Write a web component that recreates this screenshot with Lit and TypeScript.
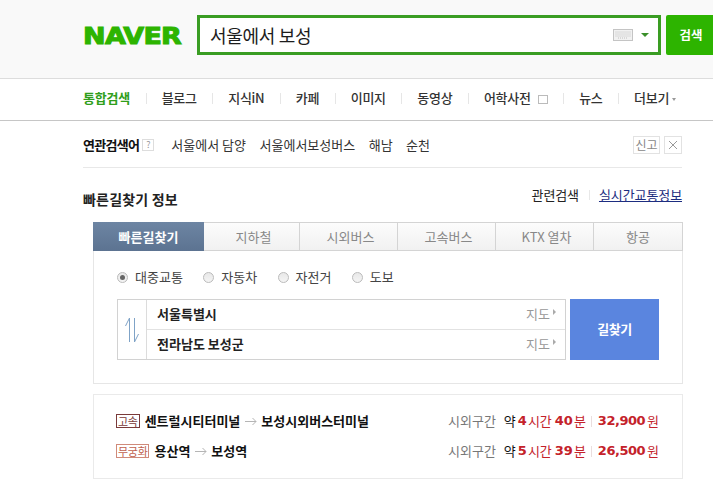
import { LitElement, html, css } from "lit";
import { customElement } from "lit/decorators.js";

const NAV = ["블로그", "지식iN", "카페", "이미지", "동영상", "어학사전", "뉴스", "더보기"];
const TABS = ["빠른길찾기", "지하철", "시외버스", "고속버스", "KTX 열차", "항공"];
const MODES = ["대중교통", "자동차", "자전거", "도보"];
const PLACES = ["서울특별시", "전라남도 보성군"];
const ROUTES = [
  { badge: "고속", cls: "dark", from: "센트럴시티터미널", to: "보성시외버스터미널", h: "4", m: "40", price: "32,900" },
  { badge: "무궁화", cls: "light", from: "용산역", to: "보성역", h: "5", m: "39", price: "26,500" },
];

@customElement("app-root")
export class AppRoot extends LitElement {
  static styles = css`
    :host {
      display: block;
      width: 713px;
      height: 492px;
      overflow: hidden;
      background: #fff;
      color: #222;
      font-family: "Noto Sans CJK KR", "Noto Sans", sans-serif;
      font-size: 13px;
      line-height: 16px;
    }
    header {
      height: 78px;
      box-sizing: content-box;
      background: #f9f9f9;
      border-bottom: 1px solid #ddd;
      display: flex;
      align-items: center;
      padding-left: 83px;
      overflow: hidden;
    }
    .logo {
      width: 114px;
      flex: none;
      font-family: "DejaVu Sans", sans-serif;
      font-weight: 700;
      font-size: 22.5px;
      line-height: 24px;
      letter-spacing: -0.6px;
      color: #2db400;
      -webkit-text-stroke: 1px #2db400;
      margin-top: -6px;
      transform: scaleX(1.2);
      transform-origin: left center;
    }
    .search {
      flex: none;
      width: 464px;
      height: 40px;
      box-sizing: border-box;
      border: 3px solid #3a9d23;
      background: #fff;
      display: flex;
      align-items: center;
      padding: 0 10px;
      margin-top: -8px;
      font-size: 18px;
      color: #1c1c1c;
    }
    .search .q { flex: 1; letter-spacing: -0.3px; }
    .search svg { display: block; }
    .caret { width: 0; height: 0; border: 4px solid transparent; border-top: 4px solid #3a8f2a; border-bottom: 0; margin-left: 8px; margin-right: -1px; }
    .go {
      flex: none;
      width: 60px;
      height: 40px;
      margin: -8px 0 0 5px;
      background: #2db400;
      border-radius: 2px;
      color: #fff;
      font-weight: 700;
      font-size: 12.5px;
      display: flex;
      align-items: center;
      justify-content: center;
      padding-right: 10px;
      box-sizing: border-box;
    }
    nav {
      height: 42px;
      box-sizing: border-box;
      padding-bottom: 3px;
      border-bottom: 1px solid #c6c6c6;
      display: flex;
      align-items: center;
      padding-left: 83px;
      font-weight: 500;
      color: #333;
      letter-spacing: -0.3px;
    }
    nav .on { color: #2f9e1a; font-weight: 700; letter-spacing: -0.2px; }
    nav .sep { width: 1px; height: 11px; background: #e6e6e6; margin: 0 15px 0 15.6px; }
    nav .ext { width: 10px; height: 9px; border: 1px solid #bbb; margin-left: 7px; display: inline-block; vertical-align: -1px; box-sizing: border-box; }
    nav .tri { display: inline-block; width: 0; height: 0; border: 2.5px solid transparent; border-top: 3px solid #999; border-bottom: 0; margin-left: 3px; vertical-align: 2px; }
    main { padding: 0 31px 0 83px; }
    .related {
      height: 47px;
      box-sizing: border-box;
      padding-top: 2px;
      border-bottom: 1px solid #e8e8e8;
      display: flex;
      align-items: center;
    }
    .related b { font-weight: 700; letter-spacing: -0.7px; color: #111; }
    .help { width: 12px; height: 12px; box-sizing: border-box; border: 1px solid #ddd; font-size: 9px; line-height: 10px; text-align: center; color: #999; margin: 0 17px 0 3px; }
    .related a { margin-right: 13.5px; color: #333; }
    .related .sp { flex: 1; }
    .box { height: 18px; border: 1px solid #e2e2e2; box-sizing: border-box; display: flex; align-items: center; justify-content: center; color: #888; font-size: 12px; }
    .report { width: 27px; margin-right: 4px; }
    .close { width: 18px; }
    .titlebar {
      display: flex;
      align-items: flex-start;
      height: 54px;
      padding-top: 19px;
      box-sizing: border-box;
    }
    .titlebar h2 { margin: 4px 0 0; flex: 1; font-size: 14px; line-height: 16px; font-weight: 700; color: #222; letter-spacing: 0.2px; }
    .titlebar span { color: #222; letter-spacing: -0.1px; }
    .titlebar .sep { width: 1px; height: 10px; background: #e8e8e8; margin: 3px 9px 0 10px; }
    .titlebar .live { color: #1d2d80; text-decoration: underline; }
    .wrap { margin-left: 10px; width: 590px; }
    .tabs {
      display: grid;
      grid-template-columns: 111px 96px 98px 98px 98px 89px;
      height: 29px;
      box-sizing: border-box;
      color: #888;
    }
    .tab {
      display: flex;
      align-items: center;
      justify-content: center;
      background: linear-gradient(#fcfcfc, #f1f1f1);
      border: 1px solid #d4d4d4;
      border-left: 0;
      box-sizing: border-box;
      padding-left: 4px;
    }
    .tab:last-child { padding-left: 0; }
    .tab.active {
      background: linear-gradient(#6d85a3, #5c7391);
      border: 0;
      padding-left: 0;
      color: #fff;
      font-weight: 700;
    }
    .panel {
      border: 1px solid #e6e6e6;
      border-top: 0;
      height: 133px;
      box-sizing: border-box;
      padding: 16px 23px 0 23px;
    }
    .modes { display: flex; height: 20px; align-items: center; color: #444; margin-bottom: 12px; }
    .mode { display: flex; align-items: center; margin-right: 20.4px; }
    .radio {
      width: 11px;
      height: 11px;
      border-radius: 50%;
      box-sizing: border-box;
      border: 1px solid #bbb;
      background: linear-gradient(#e8e8e8, #f4f4f4);
      margin-right: 7px;
      display: flex;
      align-items: center;
      justify-content: center;
    }
    .radio.on::after { content: ""; width: 5px; height: 5px; border-radius: 50%; background: #666; }
    .route { display: flex; }
    .fields { width: 449px; height: 61px; box-sizing: border-box; border: 1px solid #d2d2d2; display: flex; }
    .swap { width: 29px; flex: none; border-right: 1px solid #dcdcdc; display: flex; align-items: center; justify-content: center; box-sizing: border-box; }
    .rows { flex: 1; display: flex; flex-direction: column; }
    .row { flex: 1; display: flex; align-items: center; padding: 0 9px 2px 10px; box-sizing: border-box; font-weight: 700; color: #222; }
    .row + .row { border-top: 1px solid #e2e2e2; }
    .row .name { flex: 1; }
    .row .map { font-weight: 400; color: #999; }
    .row .arr { width: 0; height: 0; border: 3px solid transparent; border-left: 3px solid #aaa; border-right: 0; margin-left: 3px; margin-top: -3px; }
    .find {
      margin-left: 4px;
      width: 89px;
      height: 61px;
      background: #5a85df;
      color: #fff;
      font-weight: 700;
      display: flex;
      align-items: center;
      justify-content: center;
      padding-bottom: 2px;
      box-sizing: border-box;
      letter-spacing: -0.5px;
    }
    .results {
      margin-top: 10px;
      height: 85px;
      box-sizing: border-box;
      border: 1px solid #eaeaea;
      padding: 11px 23px 0 22px;
    }
    .res { height: 30px; display: flex; align-items: center; font-weight: 700; color: #111; }
    .badge { border: 1px solid; font-size: 11px; font-weight: 400; line-height: 12px; height: 14px; box-sizing: border-box; padding: 0 1px; margin-right: 5px; letter-spacing: -0.3px; }
    .badge.dark { color: #7a3a3a; border-color: #7a3a3a; }
    .badge.light { color: #c0624f; border-color: #d08a7a; }
    .arrow { margin: 0 4px 0 5px; display: block; }
    .res .sp { flex: 1; }
    .zone { font-weight: 400; color: #777; margin-right: 8px; }
    .yak { font-weight: 400; color: #111; margin-right: 2px; }
    .red { color: #c4222a; }
    .red.n { font-weight: 400; }
    .num { font-family: "DejaVu Sans", sans-serif; font-weight: 700; color: #c4222a; font-size: 13px; margin-right: 1px; }
    .num.mm { margin-left: 3px; }
    .price { font-family: "DejaVu Sans", sans-serif; font-weight: 700; color: #c4222a; font-size: 13px; letter-spacing: -0.5px; margin-right: 2px; }
    .res .sep { width: 1px; height: 11px; background: #eadede; margin: 0 6px 0 5px; }
  `;

  render() {
    return html`
      <header>
        <div class="logo">NAVER</div>
        <div class="search">
          <div class="q">서울에서 보성</div>
          <svg width="20" height="12" viewBox="0 0 20 12">
            <rect x="0.5" y="0.5" width="19" height="11" fill="#f1f1f1" stroke="#c4c4c4" />
            <path d="M2.5 3h15M2.5 5h15M2.5 7h15M5 9h10" stroke="#c0c0c0" stroke-dasharray="1 1" fill="none" />
          </svg>
          <div class="caret"></div>
        </div>
        <div class="go">검색</div>
      </header>
      <nav>
        <span class="on">통합검색</span>
        ${NAV.map(
          (n) => html`<span class="sep"></span><span
              >${n}${n === "어학사전" ? html`<i class="ext"></i>` : ""}${n === "더보기"
                ? html`<i class="tri"></i>`
                : ""}</span
            >`
        )}
      </nav>
      <main>
        <div class="related">
          <b>연관검색어</b>
          <div class="help">?</div>
          <a>서울에서 담양</a><a>서울에서보성버스</a><a>해남</a><a>순천</a>
          <div class="sp"></div>
          <div class="box report">신고</div>
          <div class="box close">
            <svg width="10" height="10" viewBox="0 0 10 10"><path d="M1 1l8 8M9 1l-8 8" stroke="#999" fill="none" /></svg>
          </div>
        </div>
        <div class="titlebar">
          <h2>빠른길찾기 정보</h2>
          <span>관련검색</span><i class="sep"></i><span class="live">실시간교통정보</span>
        </div>
        <div class="wrap">
          <div class="tabs">
            ${TABS.map((t, i) => html`<div class="tab ${i === 0 ? "active" : ""}">${t}</div>`)}
          </div>
          <div class="panel">
            <div class="modes">
              ${MODES.map(
                (m, i) => html`<div class="mode"><i class="radio ${i === 0 ? "on" : ""}"></i>${m}</div>`
              )}
            </div>
            <div class="route">
              <div class="fields">
                <div class="swap">
                  <svg width="16" height="26" viewBox="0 0 16 26">
                    <path d="M5.5 25V1L1.5 9M10.5 1v24l4-8" stroke="#7fa3c7" fill="none" />
                  </svg>
                </div>
                <div class="rows">
                  ${PLACES.map(
                    (p) => html`<div class="row"><span class="name">${p}</span><span class="map">지도</span><i class="arr"></i></div>`
                  )}
                </div>
              </div>
              <div class="find">길찾기</div>
            </div>
          </div>
          <div class="results">
            ${ROUTES.map(
              (r) => html`<div class="res">
                <span class="badge ${r.cls}">${r.badge}</span>
                <span>${r.from}</span>
                <svg class="arrow" width="12" height="9" viewBox="0 0 12 9">
                  <path d="M0 4.5h11M7.5 1L11 4.5L7.5 8" stroke="#b5b5b5" fill="none" />
                </svg>
                <span>${r.to}</span>
                <span class="sp"></span>
                <span class="zone">시외구간</span>
                <span class="yak">약</span>
                <span class="num">${r.h}</span><span class="red n">시간</span>
                <span class="num mm">${r.m}</span><span class="red n">분</span>
                <i class="sep"></i>
                <span class="price">${r.price}</span><span class="red n">원</span>
              </div>`
            )}
          </div>
        </div>
      </main>
    `;
  }
}
